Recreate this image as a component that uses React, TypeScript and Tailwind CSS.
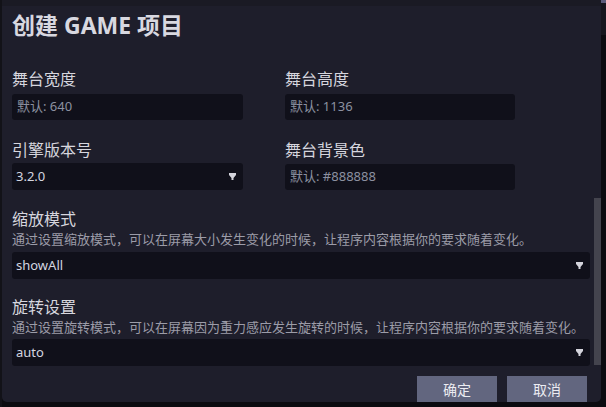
import React from 'react'

const font = { fontFamily: '"Noto Sans", "Noto Sans CJK SC", sans-serif' }

function Arrow() {
  return (
    <svg width="7" height="7" viewBox="0 0 7 7" className="shrink-0">
      <path d="M0 0H7V2L4.5 5V7H2.5V5L0 2Z" fill="#d4d4dc" />
    </svg>
  )
}

function TextInput({ placeholder }: { placeholder: string }) {
  return (
    <div className="flex h-[26px] items-center rounded-[3px] bg-[#10101a] px-[5px] text-[13px] text-[#8c90a0]">
      {placeholder}
    </div>
  )
}

function Select({ value }: { value: string }) {
  return (
    <div className="flex h-[27px] items-center justify-between rounded-[3px] bg-[#10101a] pl-[4px] pr-[7px] text-[13px] text-[#d4d6e0]">
      <span>{value}</span>
      <Arrow />
    </div>
  )
}

function Label({ children }: { children: React.ReactNode }) {
  return <div className="text-[16px] leading-[22px] text-[#d6d6de]">{children}</div>
}

function Hint({ children }: { children: React.ReactNode }) {
  return <div className="whitespace-nowrap text-[13px] leading-[18px] text-[#9c9ca8]">{children}</div>
}

export default function App() {
  return (
    <div className="flex h-[407px] w-[606px] overflow-hidden bg-[#0b0b10]" style={font}>
      <div className="w-[2px] bg-[#121218]" />
      <div className="flex w-[599px] flex-col">
        <div className="h-[6px] shrink-0 bg-[#1a1a24]" />
        <div className="flex h-[396px] overflow-hidden rounded-b-[5px] bg-[#1e1e2b]">
          <div className="w-[588px] shrink-0 pl-[10px] pt-[4px]">
            <div className="w-[578px]">
              <h1 className="text-[23px] font-bold leading-[30px] text-[#d8d8e0]">创建 GAME 项目</h1>

              <div className="mt-[28px] grid grid-cols-[231px_230px] gap-x-[42px]">
                <div>
                  <Label>舞台宽度</Label>
                  <div className="mt-[4px]"><TextInput placeholder="默认: 640" /></div>
                </div>
                <div>
                  <Label>舞台高度</Label>
                  <div className="mt-[4px]"><TextInput placeholder="默认: 1136" /></div>
                </div>
                <div className="mt-[19px]">
                  <Label>引擎版本号</Label>
                  <div className="mt-[2px]"><Select value="3.2.0" /></div>
                </div>
                <div className="mt-[19px]">
                  <Label>舞台背景色</Label>
                  <div className="mt-[3px]"><TextInput placeholder="默认: #888888" /></div>
                </div>
              </div>

              <div className="mt-[18px]">
                <Label>缩放模式</Label>
                <Hint>通过设置缩放模式，可以在屏幕大小发生变化的时候，让程序内容根据你的要求随着变化。</Hint>
                <div className="mt-[4px]"><Select value="showAll" /></div>
              </div>

              <div className="mt-[17px]">
                <Label>旋转设置</Label>
                <Hint>通过设置旋转模式，可以在屏幕因为重力感应发生旋转的时候，让程序内容根据你的要求随着变化。</Hint>
                <div className="mt-[3px]"><Select value="auto" /></div>
              </div>

              <div className="mt-[10px] flex justify-end gap-[10px] pr-[3px]">
                <button className="h-[26px] w-[80px] bg-[#62667f] text-[14px] text-[#ececf2]">确定</button>
                <button className="h-[26px] w-[80px] bg-[#62667f] text-[14px] text-[#ececf2]">取消</button>
              </div>
            </div>
          </div>
          <div className="ml-[4px] w-[9px] shrink-0">
            <div className="mt-[192px] h-[167px] bg-[#44444e]" />
          </div>
        </div>
      </div>
      <div className="flex w-[5px] flex-col">
        <div className="h-[3px] bg-[#5c5c7c]" />
        <div className="h-[32px] bg-[#16161e]" />
      </div>
    </div>
  )
}
